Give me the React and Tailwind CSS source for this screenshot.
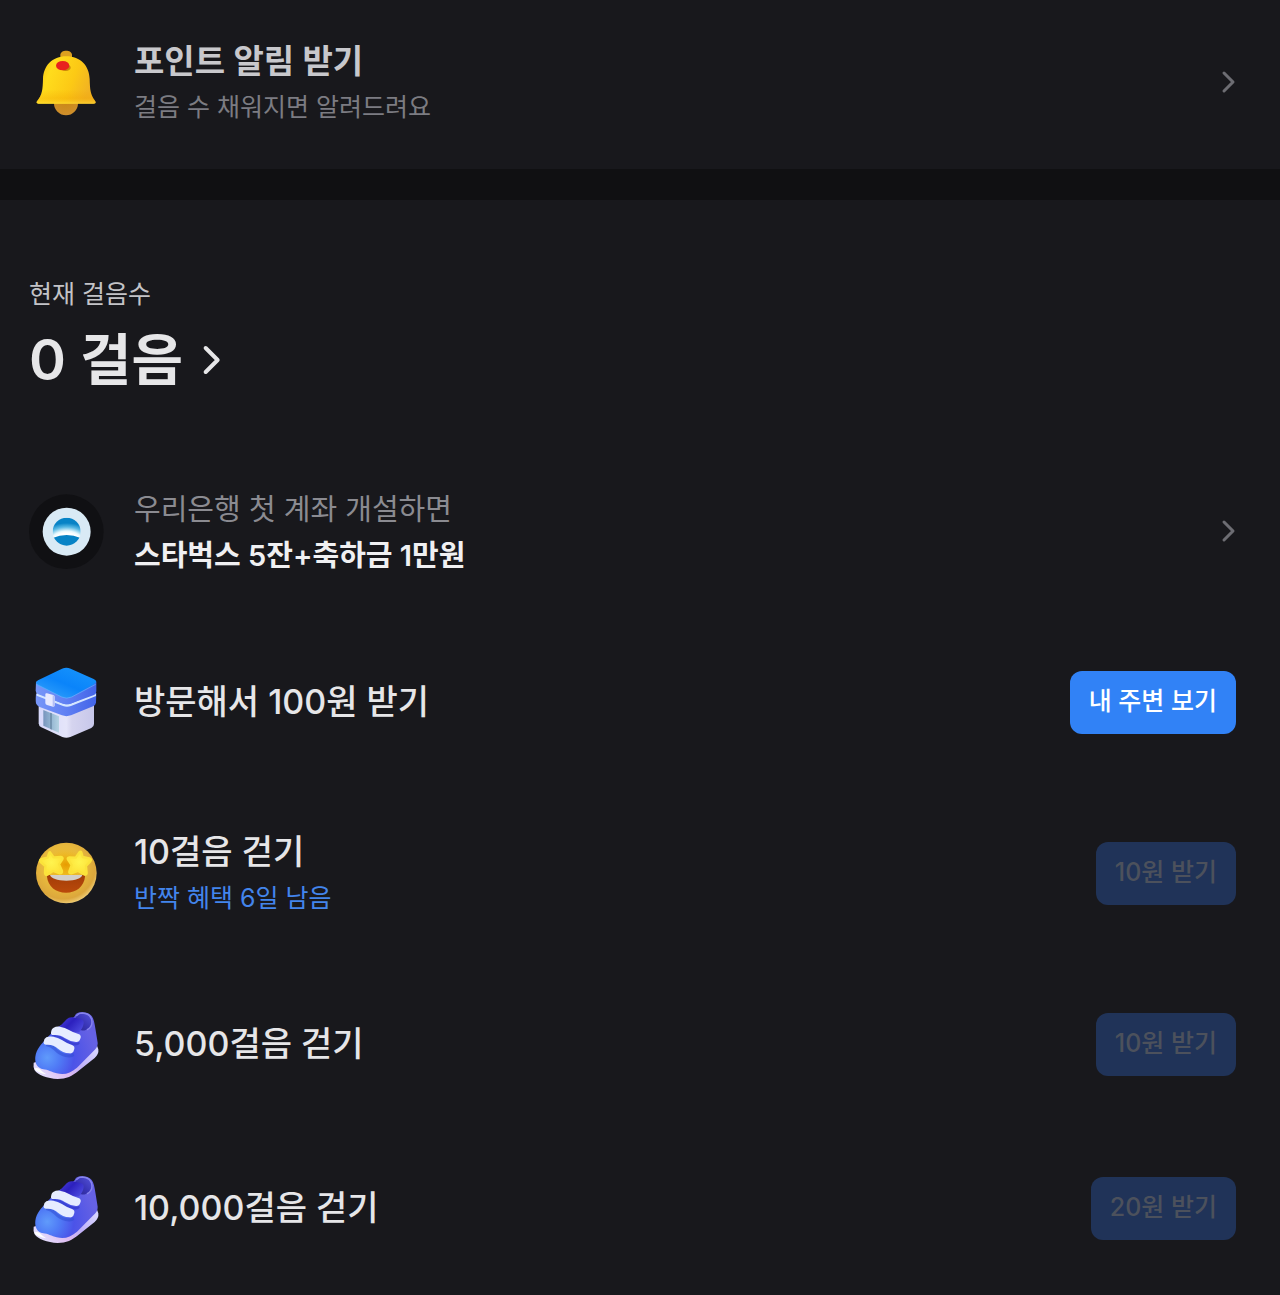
import React from 'react';

function Chevron({ className }) {
    return (
        <svg viewBox="0 0 16 24" className={className} fill="none" stroke="currentColor" strokeLinecap="round" strokeLinejoin="round" aria-hidden="true">
            <path d="M4 3l9 9-9 9" />
        </svg>
    );
}

function BellIcon() {
    return (
        <svg viewBox="27 26 225 225" className="size-[75px] shrink-0" aria-hidden="true">
            <defs>
                <linearGradient id="bellBody" x1="0" y1="0" x2="1" y2="0.3">
                    <stop offset="0" stopColor="#f5b90c" />
                    <stop offset="0.3" stopColor="#ffdc1c" />
                    <stop offset="0.7" stopColor="#fcc915" />
                    <stop offset="1" stopColor="#f2b322" />
                </linearGradient>
                <linearGradient id="bellShade" x1="0" y1="0" x2="0" y2="1">
                    <stop offset="0.7" stopColor="#f0a000" stopOpacity="0" />
                    <stop offset="0.88" stopColor="#f0a000" stopOpacity="0.3" />
                    <stop offset="1" stopColor="#ffe03a" stopOpacity="0.6" />
                </linearGradient>
                <radialGradient id="bellClapper" cx="0.5" cy="0.3" r="0.7">
                    <stop offset="0" stopColor="#c9860f" />
                    <stop offset="1" stopColor="#cf8f2d" />
                </radialGradient>
            </defs>
            <circle cx="138" cy="201" r="36" fill="url(#bellClapper)" />
            <path d="M121 66V56c0-17 35-17 35 0v10z" fill="#dda020" />
            <path d="M139 60C96 60 70 89 69 128c-1 31-2 48-17 65-5 6-1 9 6 9h162c7 0 9-4 5-9-14-17-15-34-16-65-1-39-27-68-70-68z" fill="url(#bellBody)" />
            <path d="M139 60C96 60 70 89 69 128c-1 31-2 48-17 65-5 6-1 9 6 9h162c7 0 9-4 5-9-14-17-15-34-16-65-1-39-27-68-70-68z" fill="url(#bellShade)" />
            <ellipse cx="137" cy="94" rx="15" ry="10" fill="#c98a08" />
            <ellipse cx="128" cy="88" rx="20" ry="14" fill="#e8221e" />
        </svg>
    );
}

function BankIcon() {
    return (
        <svg viewBox="27 28 225 225" className="size-[75px] shrink-0" aria-hidden="true">
            <defs>
                <radialGradient id="bankGlow" gradientUnits="userSpaceOnUse" cx="0" cy="0" r="60" gradientTransform="translate(140 175) scale(1.4 1)">
                    <stop offset="0.5" stopColor="#ffffff" />
                    <stop offset="0.6" stopColor="#e6f7fd" />
                    <stop offset="0.8" stopColor="#58b9e4" />
                    <stop offset="1" stopColor="#0783c6" />
                </radialGradient>
                <clipPath id="bankClip">
                    <circle cx="140" cy="141" r="42" />
                </clipPath>
            </defs>
            <circle cx="139" cy="141" r="112" fill="#101013" />
            <circle cx="140" cy="141" r="72" fill="#d9eaf5" />
            <g clipPath="url(#bankClip)">
                <path d="M98 99h84v84H98z" fill="url(#bankGlow)" />
                <path d="M98 160q42-18 84 0v24H98z" fill="#0783c6" />
            </g>
        </svg>
    );
}

function StoreIcon() {
    return (
        <svg viewBox="27 22 225 225" className="size-[75px] shrink-0" aria-hidden="true">
            <defs>
                <linearGradient id="storeRoof" x1="0.2" y1="0.9" x2="0.8" y2="0.2">
                    <stop offset="0" stopColor="#2b9bfa" />
                    <stop offset="0.5" stopColor="#0a84fa" />
                    <stop offset="1" stopColor="#1490fb" />
                </linearGradient>
                <linearGradient id="storeWall" x1="0" y1="0" x2="1" y2="0">
                    <stop offset="0" stopColor="#d6d8fa" />
                    <stop offset="0.5" stopColor="#e5e5fa" />
                    <stop offset="0.6" stopColor="#d5d4ef" />
                    <stop offset="1" stopColor="#c7c7ea" />
                </linearGradient>
                <linearGradient id="storeBand" x1="0" y1="0" x2="1" y2="0">
                    <stop offset="0" stopColor="#7897f8" />
                    <stop offset="0.5" stopColor="#6080f3" />
                    <stop offset="1" stopColor="#4264e8" />
                </linearGradient>
                <linearGradient id="storeDoor" x1="0" y1="0" x2="1" y2="0">
                    <stop offset="0" stopColor="#7895bd" />
                    <stop offset="0.5" stopColor="#94b6d2" />
                    <stop offset="1" stopColor="#b5d3e3" />
                </linearGradient>
            </defs>
            <path d="M56 140h166v59q0 8-8 12l-63 27q-12 5-24 0l-63-29q-8-4-8-12z" fill="url(#storeWall)" />
            <path d="M70 157l47 19v49l-47-21z" fill="url(#storeDoor)" />
            <path d="M91 165l4 2v49l-4-2z" fill="#64839f" />
            <path d="M48 108q-2 25 1 31 2 5 10 9l67 25q13 5 27 0l66-27q8-4 9-11l1-29z" fill="url(#storeBand)" />
            <path d="M50 105l80 33q11 4 22 0l76-33v10l-75 30q-12 4-24 0l-79-31z" fill="#d4e6ff" />
            <path d="M48 72h181v29q0 8-7 11l-67 25q-15 6-30 0L55 110q-8-4-8-11z" fill="url(#storeBand)" />
            <path d="M126 33q13-6 26 0l69 31q15 7 1 16l-67 37q-15 7-30 0L54 83q-12-7 0-15z" fill="url(#storeRoof)" />
            <path d="M50 80l75 38q15 7 30 0l72-38" fill="none" stroke="#62b7ff" strokeWidth="2" />
            <path d="M76 110q0-4 5-3l19 5q4 1 4 6v25q0 5-5 4l-18-5q-5-1-5-6z" fill="#e7e9ff" />
            <path d="M98 112q6 1 6 6v25q0 5-6 4z" fill="#b6c0f5" />
        </svg>
    );
}

function StarFaceIcon() {
    return (
        <svg viewBox="27 20 225 225" className="size-[75px] shrink-0" aria-hidden="true">
            <defs>
                <radialGradient id="faceSkin" cx="0.45" cy="0.4" r="0.62">
                    <stop offset="0" stopColor="#f2bd20" />
                    <stop offset="0.55" stopColor="#e8b93c" />
                    <stop offset="0.85" stopColor="#dca73c" />
                    <stop offset="1" stopColor="#f0d07c" />
                </radialGradient>
                <linearGradient id="faceMouth" x1="0" y1="0" x2="0" y2="1">
                    <stop offset="0" stopColor="#a33d08" />
                    <stop offset="1" stopColor="#ba4a0b" />
                </linearGradient>
                <radialGradient id="faceStar" cx="0.5" cy="0.45" r="0.6">
                    <stop offset="0" stopColor="#fff44f" />
                    <stop offset="1" stopColor="#fddf35" />
                </radialGradient>
                <radialGradient id="faceShade">
                    <stop offset="0" stopColor="#e79c00" />
                    <stop offset="1" stopColor="#f0b80e" stopOpacity="0" />
                </radialGradient>
            </defs>
            <circle cx="139" cy="131" r="91" fill="url(#faceSkin)" />
            <ellipse cx="138" cy="106" rx="64" ry="42" fill="url(#faceShade)" />
            <path d="M84 137h108q3 0 3 5c-3 29-26 48-57 48s-54-19-57-48q0-5 3-5z" fill="url(#faceMouth)" />
            <path d="M90 137h97c-3 10-20 17-48 17s-46-7-49-17z" fill="#d3cfc9" />
            <path d="M91 70l10 14 22-1q7 1 4 7l-10 15 9 20q1 8-7 7l-20-7-17 11q-7 2-7-6l1-20-14-12q-5-6 3-9l18-4 4-13q2-5 4-2z" fill="url(#faceStar)" stroke="#fbe33b" strokeWidth="7" strokeLinejoin="round" />
            <path d="M184 69l4 14 20 4q8 3 3 9l-13 14 2 21q-1 7-8 4l-18-10-20 7q-8 1-6-6l7-19-11-16q-3-6 4-7l19 1 11-16q4-4 6 0z" fill="url(#faceStar)" stroke="#fbe33b" strokeWidth="7" strokeLinejoin="round" />
        </svg>
    );
}

function ShoeIcon() {
    return (
        <svg viewBox="27 20 225 225" className="size-[75px] shrink-0" aria-hidden="true">
            <defs>
                <radialGradient id="shoeBody" gradientUnits="userSpaceOnUse" cx="82" cy="172" r="145">
                    <stop offset="0" stopColor="#609bfb" />
                    <stop offset="0.25" stopColor="#507cf6" />
                    <stop offset="0.55" stopColor="#4b53e8" />
                    <stop offset="1" stopColor="#6561e4" />
                </radialGradient>
                <linearGradient id="shoeSole" x1="0" y1="0.8" x2="1" y2="0.3">
                    <stop offset="0" stopColor="#e4e4ff" />
                    <stop offset="0.4" stopColor="#ddb9f0" />
                    <stop offset="0.65" stopColor="#bfb0f8" />
                    <stop offset="1" stopColor="#d6d4ff" />
                </linearGradient>
                <linearGradient id="shoeTongue" x1="0" y1="0" x2="1" y2="0.6">
                    <stop offset="0" stopColor="#4a40d9" />
                    <stop offset="0.5" stopColor="#2c20be" />
                    <stop offset="1" stopColor="#4845da" />
                </linearGradient>
                <linearGradient id="shoeCollar" x1="0" y1="1" x2="1" y2="0">
                    <stop offset="0" stopColor="#29258c" />
                    <stop offset="0.5" stopColor="#3a36b8" />
                    <stop offset="1" stopColor="#5452d8" />
                </linearGradient>
            </defs>
            <path d="M41 187q-2 14 3 23c9 14 38 25 69 26 26 0 44-9 62-24l49-39q13-12 11-26l-6-17z" fill="url(#shoeSole)" />
            <path d="M42 205q8-4 17 1 8 9 20 16-26-4-37-17z" fill="#ffffff" />
            <path d="M180 36c14-1 27 1 35 11 6 8 9 22 11 37l7 43c1 11-5 18-13 26l-49 49c-21 18-38 22-61 17-15-3-27-12-40-12-20-4-26-20-24-38 3-21 17-37 34-55l30-32 45-26 9-8c2-6 8-11 16-12z" fill="url(#shoeBody)" />
            <path d="M180 39c20-1 31 8 34 23 2 12-4 21-14 26-10 4-20 3-26-1l-9-31c3-9 8-15 15-17z" fill="url(#shoeCollar)" />
            <path d="M170 46c4-5 9-8 17-8 18 1 28 12 29 27 0 10-5 18-14 23" fill="none" stroke="#8784ed" strokeWidth="4" strokeLinecap="round" />
            <path d="M120 78l20-21q8-8 18-6l25 6q9 3 8 11-2 16-14 28-29 2-57-18z" fill="url(#shoeTongue)" />
            <path d="M78 131q18-1 29 11 14 16 34 20 13 2 18-4l4 8q-8 8-27 4-20-5-34-20-10-10-24-13z" fill="#2e49cf" opacity="0.5" />
            <path d="M96 104q20-2 33 8 14 12 34 16 9 1 14-4l2 6q-6 8-21 4-22-5-35-17-10-8-27-9z" fill="#2e35c6" opacity="0.6" />
            <path d="M101 82q7-4 18-3 17 2 28 10 11 7 28 12 9 3 7 11l-3 8q-3 6-11 5-19-2-34-12-13-10-32-9-10 1-9-7 1-12 8-15z" fill="#e6ecff" />
            <path d="M79 111q8-4 21-2 16 3 27 11 11 8 29 14 9 3 7 12l-3 8q-4 6-12 5-20-2-34-14-14-13-33-12-11 1-10-8 1-11 8-14z" fill="#e6ecff" />
        </svg>
    );
}

const missions = [
    { title: '방문해서 100원 받기', icon: StoreIcon, action: '내 주변 보기', enabled: true },
    { title: '10걸음 걷기', note: '반짝 혜택 6일 남음', icon: StarFaceIcon, action: '10원 받기' },
    { title: '5,000걸음 걷기', icon: ShoeIcon, action: '10원 받기' },
    { title: '10,000걸음 걷기', icon: ShoeIcon, action: '20원 받기' }
];

function MissionRow({ mission }) {
    return (
        <li className="flex min-h-[76px] items-center gap-[30px]">
            <mission.icon />
            <div className={`flex flex-1 flex-col gap-1.5 ${mission.note ? 'pt-1' : ''}`}>
                <h2 className="text-[34px] leading-10 font-medium text-[#e6e6e8]">{mission.title}</h2>
                {mission.note && <p className="text-[25px] leading-10 text-[#4385ec]">{mission.note}</p>}
            </div>
            <button
                type="button"
                disabled={!mission.enabled}
                className={`h-[63px] shrink-0 rounded-xl px-[19px] text-[25px] font-medium ${mission.enabled ? 'bg-[#3182f6] text-white' : 'bg-[#203358] text-[#4c515c]'}`}
            >
                {mission.action}
            </button>
        </li>
    );
}

export default function App() {
    return (
        <main className="min-h-screen bg-[#18181c] font-['Inter','Noto_Sans_CJK_KR',sans-serif]">
            <a href="#alerts" className="flex h-[169px] items-center gap-[30px] pr-11 pb-[5px] pl-[29px]">
                <BellIcon />
                <div className="flex flex-1 flex-col gap-1.5 pt-1">
                    <h2 className="text-[33px] leading-10 font-semibold text-[#c8c8cc]">포인트 알림 받기</h2>
                    <p className="text-[25px] leading-10 text-[#7c7c82]">걸음 수 채워지면 알려드려요</p>
                </div>
                <Chevron className="h-6 w-4 shrink-0 stroke-3 text-[#6d6d73]" />
            </a>
            <div className="h-[31px] bg-[#101012]" />

            <section className="pt-[72px] pr-11 pb-[46px] pl-[29px]">
                <p className="text-[25px] leading-[44px] text-[#c3c3c7]">현재 걸음수</p>
                <a href="#steps" className="flex items-center gap-4 text-[#e6e6e8]">
                    <h1 className="text-[56px] leading-[88px] font-semibold">0 걸음</h1>
                    <Chevron className="h-8 w-6 stroke-3" />
                </a>

                <ul className="mt-[82px] flex flex-col gap-[88px]">
                    <li>
                        <a href="#account" className="flex items-center gap-[30px]">
                            <BankIcon />
                            <div className="flex flex-1 flex-col gap-1.5 pt-1">
                                <p className="text-[29px] leading-10 text-[#8b8b91]">우리은행 첫 계좌 개설하면</p>
                                <p className="text-[29px] leading-10 font-semibold text-[#f0f0f2]">스타벅스 5잔+축하금 1만원</p>
                            </div>
                            <Chevron className="h-6 w-4 shrink-0 stroke-3 text-[#6d6d73]" />
                        </a>
                    </li>
                    {missions.map((mission) => (
                        <MissionRow key={mission.title} mission={mission} />
                    ))}
                </ul>
            </section>
        </main>
    );
}
